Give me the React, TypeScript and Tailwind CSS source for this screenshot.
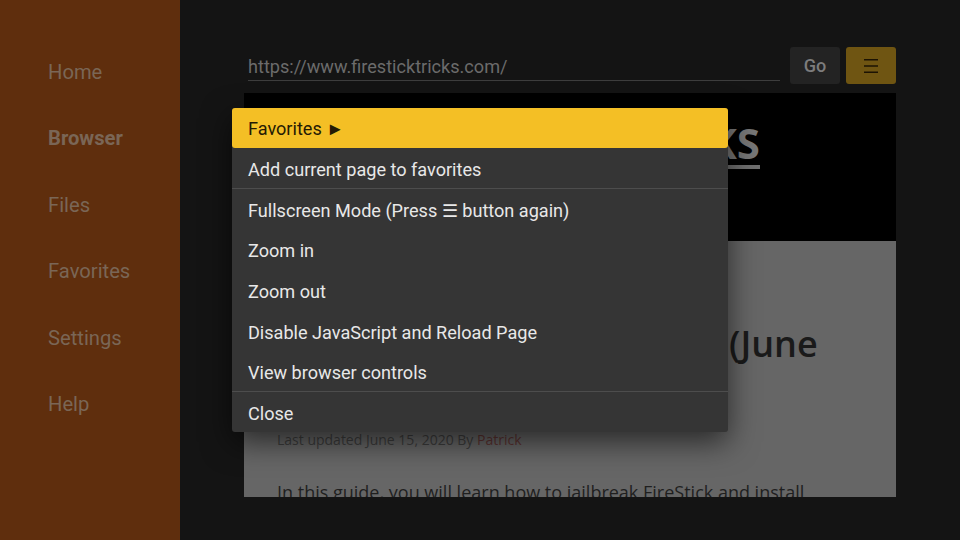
const navItems = ['Home', 'Browser', 'Files', 'Favorites', 'Settings', 'Help']

const menuRows = [
  { label: 'Favorites ►', active: true },
  { label: 'Add current page to favorites', divider: true },
  { label: 'Fullscreen Mode (Press ☰ button again)' },
  { label: 'Zoom in' },
  { label: 'Zoom out' },
  { label: 'Disable JavaScript and Reload Page' },
  { label: 'View browser controls', divider: true },
  { label: 'Close' },
]

export default function App() {
  return (
    <div className="flex w-[960px] h-[540px] overflow-hidden bg-[#141414] font-['Roboto',sans-serif]">
      {/* Sidebar */}
      <div className="w-[180px] shrink-0 bg-[#5f2e0d] pt-[38px] pl-[48px]">
        {navItems.map((item) => (
          <div
            key={item}
            className={`h-[66.5px] pt-[1px] flex items-center text-[20.2px] text-[#7a6656] ${item === 'Browser' ? 'font-bold' : ''}`}
          >
            {item}
          </div>
        ))}
      </div>

      {/* Main */}
      <div className="relative flex-1 pt-[47px] pl-[68px] pr-[64px]">
        <div className="flex h-[37px]">
          <div className="w-[532px] h-[34px] mr-[10px] border-b border-[#3d3d3d] text-[18.13px] leading-[40px] text-[#6b6b6b]">
            https://www.firesticktricks.com/
          </div>
          <div className="w-[50px] mr-[6px] flex items-center justify-center rounded-[3px] bg-[#232323] text-[18.13px] font-medium text-[#7c7c7c]">
            Go
          </div>
          <div className="w-[50px] flex items-center justify-center rounded-[3px] bg-[#6f5512]">
            <svg width="14" height="14" viewBox="0 0 14 14" fill="none">
              <path d="M0 .75h14M0 7h14M0 13.25h14" stroke="#1c1303" strokeWidth="1.5" />
            </svg>
          </div>
        </div>

        {/* Web page */}
        <div className="ml-[-4px] mt-[9px] h-[404px] overflow-hidden bg-[#666666] font-['Open_Sans',sans-serif]">
          <div className="h-[148px] bg-black flex justify-end pr-[136px] pt-[27px]">
            <div className="h-[49px] border-b-[4px] border-[#6f6f6f] text-[42px] leading-[46px] font-bold text-[#777777] whitespace-nowrap">
              TRICKS
            </div>
          </div>
          <div className="pl-[33px] pt-[79px] text-[36px] leading-[48px] font-semibold text-[#1a1a1a] whitespace-nowrap">
            How to Jailbreak FireStick (June
          </div>
          <div className="pl-[33px] mt-[62px] text-[14px] leading-[20px] text-[#3d3d3d]">
            Last updated June 15, 2020 By <span className="text-[#5c3331]">Patrick</span>
          </div>
          <div className="pl-[33px] mt-[29px] text-[18px] leading-[26px] text-[#1f1f1f] whitespace-nowrap">
            In this guide, you will learn how to jailbreak FireStick and install
          </div>
        </div>

        {/* Menu */}
        <div className="absolute left-[52px] top-[108px] w-[496px] rounded-[3px] bg-[#353535] shadow-[0_10px_30px_rgba(0,0,0,0.6)]">
          {menuRows.map((row) => (
            <div
              key={row.label}
              className={`flex items-center pl-[16px] text-[18.1px] ${
                row.active ? 'h-[40px] pt-[2px] rounded-[3px] bg-[#f4bf25] text-[#241a04]' : 'h-[40.6px] pt-[3px] text-[#e8e8e8]'
              } ${row.divider ? 'border-b border-[#4d4d4d]' : ''}`}
            >
              {row.label}
            </div>
          ))}
        </div>
      </div>
    </div>
  )
}
